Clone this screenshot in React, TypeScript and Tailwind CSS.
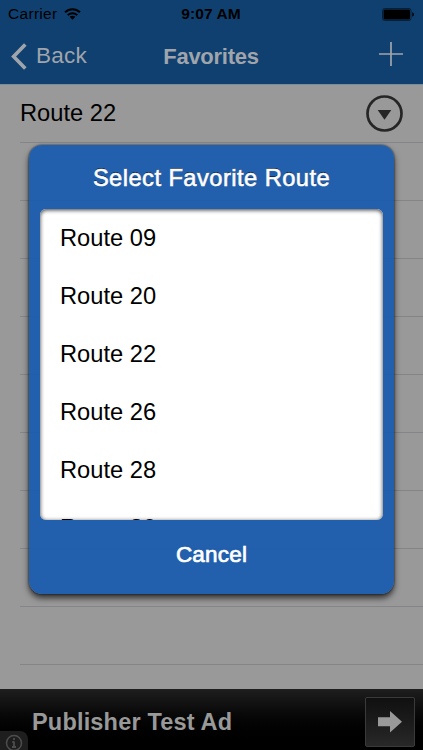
const routes = ["Route 09", "Route 20", "Route 22", "Route 26", "Route 28", "Route 30"];

const StatusBar = () => {
    return (
        <div className="grid h-7 grid-cols-3 items-center pl-2 pr-[9px] text-[15px] text-black">
            <div className="flex items-center gap-[7px]">
                <span className="text-[15.5px] tracking-[0.3px]">Carrier</span>
                <svg width="17" height="12" viewBox="0 0 17 12" fill="none" stroke="black" strokeWidth="2">
                    <path d="M1 4.3C5.2 .1 11.8 .1 16 4.3M3.7 7.1C6.4 4.5 10.6 4.5 13.3 7.1" />
                    <path d="M5.6 8.8C7.2 7.3 9.8 7.3 11.4 8.8L8.5 11.7Z" fill="black" stroke="none" />
                </svg>
            </div>
            <span className="text-center text-[15.5px] font-bold tracking-[0.1px]">9:07 AM</span>
            <svg className="justify-self-end" width="32" height="13" viewBox="0 0 32 13">
                <rect x=".5" y=".5" width="28.5" height="12" rx="2" fill="none" stroke="#07203a" />
                <rect x="1.5" y="1.5" width="26.5" height="10" rx="1" />
                <path d="M30.3 4.3C32.5 5 32.5 8 30.3 8.7Z" />
            </svg>
        </div>
    )
}

const NavBar = () => {
    return (
        <div className="grid h-[57px] grid-cols-[1fr_auto_1fr] items-center border-b border-[#788ca3] pl-[11px] pr-5 text-[#a0a5ac]">
            <div className="flex items-center gap-[9px]">
                <svg width="16" height="27" viewBox="0 0 16 27" fill="none" stroke="currentColor" strokeWidth="3.6">
                    <path d="M14.3 1.4L2.6 13.5L14.3 25.6" />
                </svg>
                <span className="text-[22.5px] tracking-[0.25px]">Back</span>
            </div>
            <h1 className="ml-2 text-center text-[22px] font-bold tracking-[-0.25px]">Favorites</h1>
            <svg className="mb-1 justify-self-end" width="24" height="24" viewBox="0 0 24 24" stroke="currentColor" strokeWidth="1.7">
                <path d="M0 12H24M12 0V24" />
            </svg>
        </div>
    )
}

const AdBanner = () => {
    return (
        <div className="relative flex h-[61px] items-start justify-between bg-linear-to-b from-[#1e1e1e] to-black pl-8 pr-2 pt-2">
            <span className="mt-[9px] text-[23.5px] leading-8 font-bold tracking-[0.18px] text-[#999]">Publisher Test Ad</span>
            <div className="flex h-[50px] w-[50px] items-center justify-center rounded-[2px] border border-[#3a3a3a] bg-linear-to-b from-[#101010] to-[#282828]">
                <svg width="24" height="22" viewBox="0 0 24 22" fill="#999">
                    <path d="M0 6.3H12V0L24 10.8L12 21.5V15.3H0Z" />
                </svg>
            </div>
            <div className="absolute bottom-0 left-0 flex h-[19px] w-7 justify-center rounded-tr-[8px] bg-[#1e1e1e] pt-[3px]">
                <svg className="-ml-px" width="18" height="18" viewBox="0 0 18 18" fill="none" stroke="#4d4d4d">
                    <circle cx="9" cy="9" r="7.5" strokeWidth="1.5" />
                    <path d="M9 7.5V13M7.3 8H9M7 13H11M9 4V6" strokeWidth="1.8" />
                </svg>
            </div>
        </div>
    )
}

const RouteDialog = () => {
    return (
        <div className="absolute left-[29px] top-[145px] flex h-[449px] w-[365px] flex-col rounded-[13px] bg-[#185aae]/92 px-[11px] shadow-[0_4px_6px_rgba(0,0,0,0.7),0_0_2px_rgba(0,0,0,0.8)]">
            <h2 className="h-16 text-center text-[23.7px] leading-[67px] tracking-[0.45px] whitespace-nowrap text-white [-webkit-text-stroke:0.6px_white] [text-shadow:0_-1px_0_rgba(0,0,0,0.7)]">
                Select Favorite Route
            </h2>
            <div className="relative h-[311px] shrink-0 overflow-hidden rounded-[6px] bg-white">
                {
                    routes.map((route) => (
                        <div key={route} className="h-[58px] pl-5 text-[23.7px] leading-[58px] text-black">{route}</div>
                    ))
                }
                <div className="absolute inset-0 rounded-[6px] shadow-[inset_0_1px_4px_rgba(0,0,0,0.8)]" />
            </div>
            <button className="h-[70px] text-[22.5px] tracking-[0.2px] text-white [-webkit-text-stroke:0.7px_white]">Cancel</button>
        </div>
    )
}

const App = () => {
    return (
        <div className="relative flex h-[750px] w-[423px] flex-col overflow-hidden bg-[#999] font-['Liberation_Sans',Arial,sans-serif]">
            <div className="bg-[#104070]">
                <StatusBar />
                <NavBar />
            </div>
            <div className="flex-1">
                <div className="ml-5 flex h-[58px] items-center justify-between border-b border-[#858589] pr-5">
                    <span className="text-[23.7px] text-black">Route 22</span>
                    <svg width="37" height="37" viewBox="0 0 37 37">
                        <circle cx="18.5" cy="18.5" r="17" fill="none" stroke="#262626" strokeWidth="2.7" />
                        <path d="M11.7 15H25.3L18.5 24.7Z" fill="#262626" />
                    </svg>
                </div>
                {
                    Array.from({ length: 9 }, (_, row) => (
                        <div key={row} className="ml-5 h-[58px] border-b border-[#858589]" />
                    ))
                }
            </div>
            <AdBanner />
            <RouteDialog />
        </div>
    )
}

export default App;
